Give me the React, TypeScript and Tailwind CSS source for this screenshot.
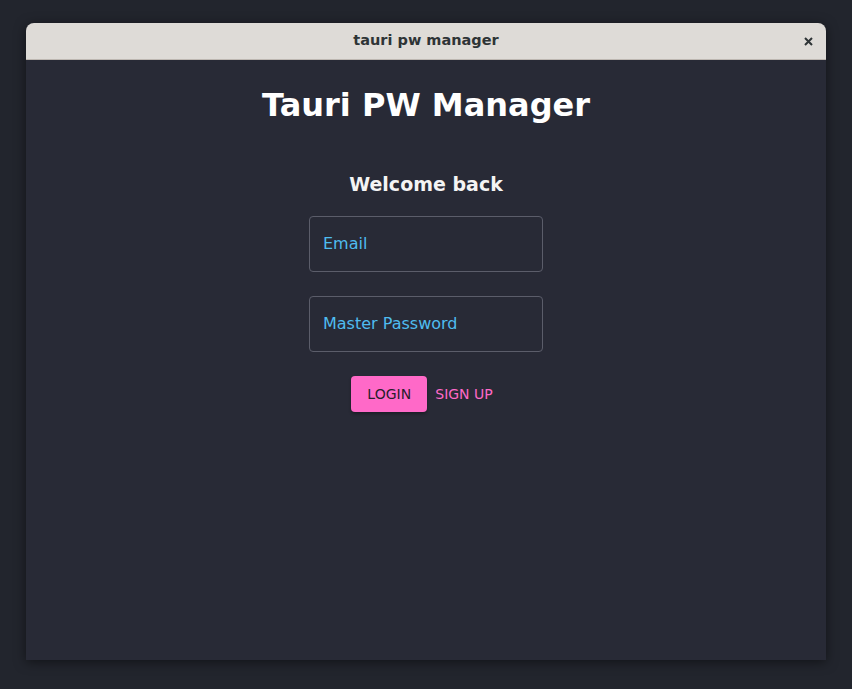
import React from "react";

export default function App() {
  return (
    <div className="w-[852px] h-[689px] bg-[#22252d] pt-[23px] pl-[26px]" style={{ fontFamily: '"DejaVu Sans", sans-serif' }}>
      <div className="w-[800px] h-[637px] flex flex-col rounded-t-[8px] overflow-hidden shadow-[0_2px_12px_rgba(0,0,0,0.5)]">
        <div className="h-[37px] bg-[#dedbd7] border-b border-[#bdb7b1] flex items-center justify-center relative">
          <span className="text-[14.5px] font-bold text-[#2e3436]">tauri pw manager</span>
          <svg className="absolute right-[13px] top-[14px]" width="9" height="9" viewBox="0 0 9 9">
            <path d="M1 1L8 8M8 1L1 8" stroke="#2e3436" strokeWidth="2" />
          </svg>
        </div>
        <div className="flex-1 bg-[#282a36] flex flex-col items-center">
          <h1 className="mt-[25px] text-[32px] leading-[40px] font-bold text-white">Tauri PW Manager</h1>
          <h2 className="mt-[47px] text-[19px] leading-[24px] font-bold text-[#f4f4f4]">Welcome back</h2>
          <div className="mt-[20px] w-[234px] h-[56px] border border-[#5b5d6a] rounded-[4px] flex items-center px-[13px]">
            <span className="text-[16px] text-[#4fbcef]">Email</span>
          </div>
          <div className="mt-[24px] w-[234px] h-[56px] border border-[#5b5d6a] rounded-[4px] flex items-center px-[13px]">
            <span className="text-[16px] text-[#4fbcef]">Master Password</span>
          </div>
          <div className="mt-[24px] flex items-center">
            <button className="w-[76px] h-[36px] rounded-[4px] bg-[#ff69c8] text-[14px] text-[#2a1d2a] shadow-[0_2px_3px_rgba(0,0,0,0.3)]">LOGIN</button>
            <button className="h-[36px] px-[8px] text-[14px] text-[#ff69c8]">SIGN UP</button>
          </div>
        </div>
      </div>
    </div>
  );
}
